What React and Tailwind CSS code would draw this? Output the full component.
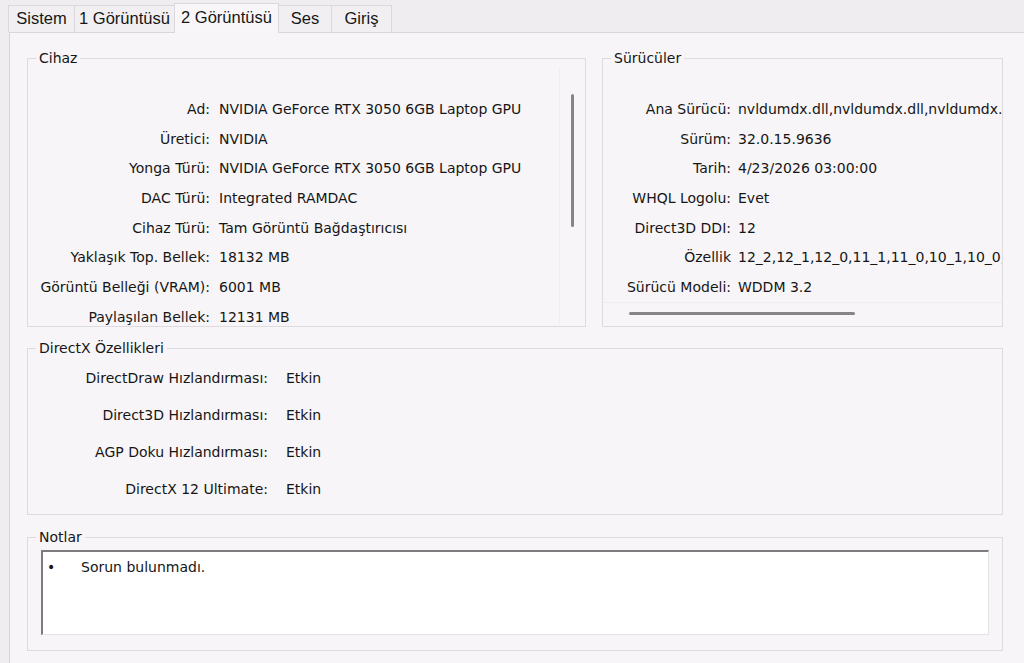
import React from 'react';

const cihaz = [
  ['Ad:', 'NVIDIA GeForce RTX 3050 6GB Laptop GPU'],
  ['Üretici:', 'NVIDIA'],
  ['Yonga Türü:', 'NVIDIA GeForce RTX 3050 6GB Laptop GPU'],
  ['DAC Türü:', 'Integrated RAMDAC'],
  ['Cihaz Türü:', 'Tam Görüntü Bağdaştırıcısı'],
  ['Yaklaşık Top. Bellek:', '18132 MB'],
  ['Görüntü Belleği (VRAM):', '6001 MB'],
  ['Paylaşılan Bellek:', '12131 MB'],
];

const suruculer = [
  ['Ana Sürücü:', 'nvldumdx.dll,nvldumdx.dll,nvldumdx.dll,nvldumdx.dll'],
  ['Sürüm:', '32.0.15.9636'],
  ['Tarih:', '4/23/2026 03:00:00'],
  ['WHQL Logolu:', 'Evet'],
  ['Direct3D DDI:', '12'],
  ['Özellik', '12_2,12_1,12_0,11_1,11_0,10_1,10_0,9_3,9_2,9_1'],
  ['Sürücü Modeli:', 'WDDM 3.2'],
];

const ozellikler = [
  ['DirectDraw Hızlandırması:', 'Etkin'],
  ['Direct3D Hızlandırması:', 'Etkin'],
  ['AGP Doku Hızlandırması:', 'Etkin'],
  ['DirectX 12 Ultimate:', 'Etkin'],
];

const tabs = [
  { name: 'Sistem', w: 'w-[67px]' },
  { name: '1 Görüntüsü', w: 'w-[101px]' },
  { name: '2 Görüntüsü', w: 'w-[105px]', active: true },
  { name: 'Ses', w: 'w-[54px]' },
  { name: 'Giriş', w: 'w-[61px]' },
];

function GroupBox({ title, className, children }) {
  return (
    <fieldset className={`min-w-0 shrink-0 border border-[#dddbdd] ${className}`}>
      <legend className="ml-[8px] px-[3px] text-[14px] leading-[20px]">{title}</legend>
      {children}
    </fieldset>
  );
}

function Row({ label, value, labelW, gap, h }) {
  return (
    <div className={`flex items-center whitespace-nowrap ${h}`}>
      <div className={`shrink-0 text-right ${labelW}`}>{label}</div>
      <div className={gap}>{value}</div>
    </div>
  );
}

export default function App() {
  return (
    <div
      className="w-[1024px] h-[663px] overflow-hidden bg-[#efedef] flex flex-col text-[#161616] text-[14px]"
      style={{ fontFamily: '"DejaVu Sans", sans-serif' }}
    >
      {/* tab strip */}
      <div className="h-[32px] flex items-end pl-[9px] shrink-0" style={{ fontFamily: '"Liberation Sans", Arial, sans-serif' }}>
        {tabs.map((t) =>
          t.active ? (
            <div
              key={t.name}
              className={`${t.w} h-[30px] -ml-px mb-[-1px] relative z-10 bg-[#f8f6f8] border border-b-0 border-[#dad8da] flex items-center justify-center text-[16.5px] pb-[2px]`}
            >
              {t.name}
            </div>
          ) : (
            <div
              key={t.name}
              className={`${t.w} h-[27px] -ml-px border border-b-0 border-[#dad8da] bg-[#f1eff1] flex items-center justify-center text-[16.5px] pb-[1px]`}
            >
              {t.name}
            </div>
          )
        )}
      </div>

      {/* tab panel */}
      <div className="ml-[9px] flex-1 border-l border-t border-[#d8d6d8] bg-[#f7f5f7] pl-[17px] pt-[15px]">
        <div className="flex gap-[16px]">
          <GroupBox title="Cihaz" className="w-[559px] h-[279px]">
            <div className="flex h-[257px]">
              <div className="flex-1 min-w-0 overflow-hidden pt-[26.5px]">
                {cihaz.map(([l, v]) => (
                  <Row key={l} label={l} value={v} labelW="w-[182px]" gap="ml-[9px]" h="h-[29.7px]" />
                ))}
              </div>
              <div className="w-[26px] shrink-0 border-l border-[#f0eef0] pt-[26px]">
                <div className="ml-[11px] w-[3px] h-[133px] rounded-full bg-[#858585]" />
              </div>
            </div>
          </GroupBox>

          <GroupBox title="Sürücüler" className="w-[401px] h-[279px]">
            <div className="flex flex-col h-[257px]">
              <div className="overflow-hidden pt-[26.5px] h-[234px]">
                {suruculer.map(([l, v]) => (
                  <Row key={l} label={l} value={v} labelW="w-[128px]" gap="ml-[7px]" h="h-[29.7px]" />
                ))}
              </div>
              <div className="border-t border-[#efedef] pt-[9px]">
                <div className="ml-[26px] w-[226px] h-[3px] rounded-full bg-[#858585]" />
              </div>
            </div>
          </GroupBox>
        </div>

        <GroupBox title="DirectX Özellikleri" className="mt-[11px] w-[976px] h-[177px]">
          <div className="pt-[2px]">
            {ozellikler.map(([l, v]) => (
              <Row key={l} label={l} value={v} labelW="w-[240px]" gap="ml-[18px]" h="h-[37px]" />
            ))}
          </div>
        </GroupBox>

        <GroupBox title="Notlar" className="mt-[12px] w-[976px] h-[124px]">
          <div className="mt-[3px] ml-[13px] w-[948px] h-[85px] bg-white border-t-2 border-l-2 border-r border-b border-t-[#7c7c7c] border-l-[#7c7c7c] border-r-[#e4e4e4] border-b-[#e4e4e4] pt-[5px] pl-[4px]">
            <div className="flex leading-[20px]">
              <span className="w-[34px]">•</span>
              <span>Sorun bulunmadı.</span>
            </div>
          </div>
        </GroupBox>
      </div>
    </div>
  );
}
